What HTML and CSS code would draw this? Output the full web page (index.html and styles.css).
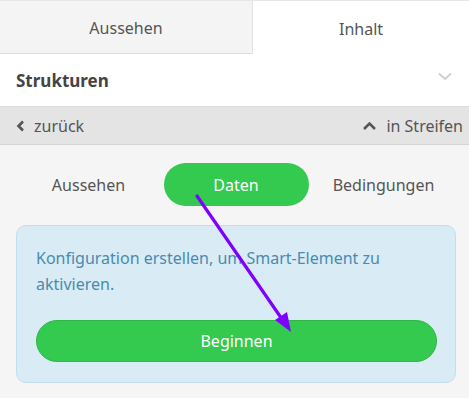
FILE: index.html
```html
<!DOCTYPE html>
<html lang="de">
<head>
<meta charset="utf-8">
<link rel="stylesheet" href="styles.css">
</head>
<body>
<div class="panel">
  <div class="tabs">
    <div class="tab">Aussehen</div>
    <div class="tab active">Inhalt</div>
  </div>
  <div class="section-head">
    <span class="title">Strukturen</span>
    <svg class="chev-down" width="14" height="9" viewBox="0 0 14 9"><path d="M1 1.5 L7 7 L13 1.5" fill="none" stroke="#cfcfcf" stroke-width="1.8"/></svg>
  </div>
  <div class="navbar">
    <span class="nav-item back"><svg width="9" height="12" viewBox="0 0 9 12"><path d="M7 1.5 L2.5 6 L7 10.5" fill="none" stroke="#555" stroke-width="2.6"/></svg>zurück</span>
    <span class="nav-item up"><svg width="15" height="10" viewBox="0 0 15 10"><path d="M2 8 L7.5 2.5 L13 8" fill="none" stroke="#555" stroke-width="2.6"/></svg>in Streifen</span>
  </div>
  <div class="content">
    <div class="pills">
      <div class="pill">Aussehen</div>
      <div class="pill active">Daten</div>
      <div class="pill">Bedingungen</div>
    </div>
    <div class="info">
      <p>Konfiguration erstellen, um Smart-Element zu aktivieren.</p>
      <div class="btn">Beginnen</div>
    </div>
  </div>
  <svg class="arrow" width="469" height="398" viewBox="0 0 469 398">
    <line x1="197" y1="196" x2="284" y2="322" stroke="#8000ff" stroke-width="3.2" stroke-linecap="round"/>
    <polygon points="291,332 275,320 287,312" fill="#8000ff"/>
  </svg>
</div>
</body>
</html>
```
FILE: styles.css
```css
* { box-sizing: border-box; }
html, body { margin: 0; padding: 0; }
body {
  font-family: "Noto Sans", "Open Sans", sans-serif;
  background: #f5f5f5;
  width: 469px;
  height: 398px;
  overflow: hidden;
}
.panel {
  position: relative;
  width: 469px;
  height: 398px;
  display: flex;
  flex-direction: column;
}
.tabs {
  display: flex;
  height: 54px;
  border-top: 1px solid #e6e6e6;
}
.tab {
  flex: 0 0 252px;
  display: flex;
  align-items: center;
  justify-content: center;
  padding-top: 2px;
  background: #f4f4f4;
  border-bottom: 1px solid #dcdcdc;
  color: #555;
  font-size: 16px;
}
.tab.active {
  flex: 1;
  background: #fff;
  border-bottom: none;
  border-left: 1px solid #e2e2e2;
}
.section-head {
  height: 53px;
  background: #fff;
  display: flex;
  align-items: center;
  justify-content: space-between;
  padding: 0 17px 0 16px;
  border-bottom: 1px solid #dcdcdc;
}
.title {
  font-weight: 700;
  font-size: 17px;
  color: #444;
}
.chev-down { margin-bottom: 8px; }
.navbar {
  height: 38px;
  background: #e4e4e4;
  border-bottom: 1px solid #d6d6d6;
  display: flex;
  align-items: center;
  justify-content: space-between;
  padding: 0 6px 0 16px;
  color: #555;
  font-size: 16px;
}
.nav-item {
  display: flex;
  align-items: center;
}
.back { gap: 9px; }
.up { gap: 9px; }
.content {
  flex: 1;
  background: #f5f5f5;
  padding: 18px 13px 0 16px;
}
.pills {
  display: flex;
  align-items: center;
  justify-content: space-between;
  height: 43px;
}
.pill {
  width: 145px;
  height: 43px;
  display: flex;
  align-items: center;
  justify-content: center;
  border-radius: 22px;
  color: #555;
  font-size: 16px;
}
.pill.active {
  background: #34c94f;
  color: #fff;
}
.info {
  margin-top: 19px;
  background: #d9ecf5;
  border: 1px solid #bfdfec;
  border-radius: 10px;
  padding: 19px 18px 20px 19px;
}
.info p {
  margin: 0 0 23px 0;
  color: #4a8ab0;
  font-size: 16px;
  line-height: 26px;
  padding-right: 30px;
}
.btn {
  height: 42px;
  border-radius: 21px;
  background: #34c94f;
  border: 1px solid #2fb848;
  color: #fff;
  font-size: 16px;
  display: flex;
  align-items: center;
  justify-content: center;
}
.arrow {
  position: absolute;
  left: 0;
  top: 0;
  pointer-events: none;
}
```
